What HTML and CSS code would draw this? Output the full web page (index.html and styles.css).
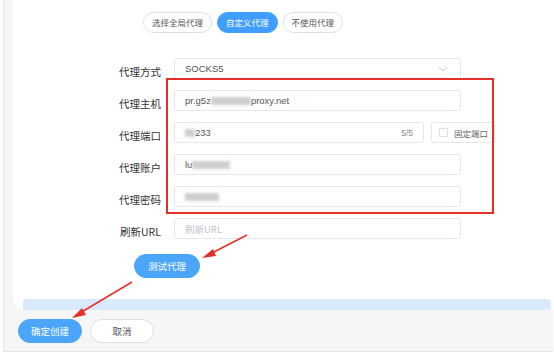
FILE: index.html
```html
<!DOCTYPE html>
<html lang="zh">

<head>
    <meta charset="UTF-8">
    <meta name="viewport" content="width=device-width, initial-scale=1.0">
    <title>代理设置</title>
    <link rel="stylesheet" href="styles.css">
</head>

<body>
    <div class="panel">
        <div class="card">
            <div class="tabs">
                <div class="tab">选择全局代理</div>
                <div class="tab active">自定义代理</div>
                <div class="tab">不使用代理</div>
            </div>

            <div class="form">
                <div class="form-row">
                    <div class="form-label">代理方式</div>
                    <div class="form-field select">
                        <span>SOCKS5</span>
                        <svg class="arrow" width="10" height="6" viewBox="0 0 10 6">
                            <path d="M1 1 L5 5 L9 1" fill="none" stroke="#c0c4cc" stroke-width="1"/>
                        </svg>
                    </div>
                </div>
                <div class="form-row">
                    <div class="form-label">代理主机</div>
                    <div class="form-field">
                        <span>pr.g5z</span><span class="blur w40"></span><span>proxy.net</span>
                    </div>
                </div>
                <div class="form-row">
                    <div class="form-label">代理端口</div>
                    <div class="form-field port">
                        <span class="blur w10"></span><span>233</span>
                        <span class="count">5/5</span>
                    </div>
                    <div class="check">
                        <span class="box"></span>固定端口
                    </div>
                </div>
                <div class="form-row">
                    <div class="form-label">代理账户</div>
                    <div class="form-field">
                        <span>lu</span><span class="blur w38"></span>
                    </div>
                </div>
                <div class="form-row">
                    <div class="form-label">代理密码</div>
                    <div class="form-field">
                        <span class="blur w34"></span>
                    </div>
                </div>
                <div class="form-row">
                    <div class="form-label">刷新URL</div>
                    <div class="form-field placeholder">刷新URL</div>
                </div>
            </div>

            <button class="btn btn-primary btn-test">测试代理</button>

            <div class="tip-bar"></div>

            <div class="highlight"></div>
        </div>

        <div class="footer">
            <button class="btn btn-primary">确定创建</button>
            <button class="btn btn-plain">取消</button>
        </div>
    </div>

    <!-- 标注箭头 -->
    <svg class="marks" width="554" height="359" viewBox="0 0 554 359">
        <line x1="247" y1="235" x2="210" y2="254" stroke="#e3302a" stroke-width="1.5"/>
        <polygon points="202,258 213,249 216,256" fill="#e3302a"/>
        <line x1="132" y1="282" x2="80" y2="313" stroke="#e3302a" stroke-width="1.5"/>
        <polygon points="72,318 82,308 86,315" fill="#e3302a"/>
    </svg>

    <div class="watermark wm1">HD-5GAA3<br>2024/08/19</div>
    <div class="watermark wm2">HD-5GAA3<br>2024/08/19</div>
</body>

</html>
```

FILE: styles.css
```css
body {
    margin: 0;
    background-color: #fff;
    font-family: "Noto Sans CJK SC", "Liberation Sans", sans-serif;
    position: relative;
    width: 554px;
    height: 359px;
    overflow: hidden;
}

.panel {
    margin-left: 3px;
    width: 550px;
    height: 352px;
    background-color: #f6f6f6;
    border-left: 1px solid #e6e6e6;
    border-bottom: 1px solid #e6e6e6;
    padding-left: 9px;
    box-sizing: border-box;
}

.card {
    position: relative;
    background-color: #fff;
    height: 310px;
    margin-right: -4px;
    border-radius: 0 0 10px 10px;
    overflow: hidden;
    padding-top: 12px;
    box-sizing: border-box;
}

.tabs {
    display: flex;
    gap: 5px;
    margin-left: 130px;
}

.tab {
    height: 21px;
    line-height: 19px;
    padding: 0 8px;
    border: 1px solid #dcdfe6;
    border-radius: 11px;
    font-size: 8.5px;
    color: #555;
    box-sizing: border-box;
}

.tab.active {
    background-color: #409eff;
    border-color: #409eff;
    color: #fff;
}

.form {
    margin-top: 25px;
    display: flex;
    flex-direction: column;
    gap: 11px;
}

.form-row {
    display: flex;
    align-items: center;
    height: 21px;
}

.form-label {
    width: 148px;
    margin-right: 13px;
    text-align: right;
    font-size: 10.5px;
    color: #333;
    padding-top: 5px;
}

.form-field {
    width: 287px;
    height: 21px;
    border: 1px solid #e4e7ed;
    border-radius: 3px;
    box-sizing: border-box;
    padding: 0 10px;
    display: flex;
    align-items: center;
    font-size: 9.5px;
    color: #555;
    font-family: "Liberation Sans", "Noto Sans CJK SC", sans-serif;
}

.select {
    justify-content: space-between;
}

.arrow {
    margin-right: 2px;
}

.port {
    width: 250px;
}

.count {
    margin-left: auto;
    font-size: 8.5px;
    color: #888;
}

.check {
    margin-left: 7px;
    width: 64px;
    height: 21px;
    border: 1px solid #e4e7ed;
    border-radius: 3px;
    box-sizing: border-box;
    display: flex;
    align-items: center;
    padding-left: 7px;
    font-size: 8.5px;
    color: #666;
    white-space: nowrap;
}

.box {
    width: 7px;
    height: 7px;
    border: 1px solid #dcdfe6;
    border-radius: 1px;
    margin-right: 6px;
}

.placeholder {
    color: #c0c4cc;
    font-family: "Noto Sans CJK SC", "Liberation Sans", sans-serif;
}

.blur {
    display: inline-block;
    height: 8px;
    background-color: #cfcfcf;
    filter: blur(1.5px);
}

.w10 { width: 10px; }
.w34 { width: 34px; }
.w38 { width: 38px; }
.w40 { width: 40px; }

.btn {
    height: 24px;
    border-radius: 12px;
    font-size: 9.5px;
    font-family: "Noto Sans CJK SC", sans-serif;
    border: 1px solid transparent;
    padding: 0;
    cursor: pointer;
}

.btn-primary {
    background-color: #4ba5f8;
    border-color: #4ba5f8;
    color: #fff;
}

.btn-plain {
    background-color: #fff;
    border-color: #dcdfe6;
    color: #555;
}

.btn-test {
    display: block;
    width: 66px;
    margin: 15px 0 0 121px;
}

.tip-bar {
    position: absolute;
    left: 10px;
    right: 6px;
    bottom: 0;
    height: 11px;
    background-color: #d9eafc;
    border-radius: 4px 4px 0 0;
}

.highlight {
    position: absolute;
    left: 153px;
    top: 78px;
    width: 328px;
    height: 136px;
    border: 2px solid #e3302a;
    box-sizing: border-box;
}

.footer {
    display: flex;
    gap: 8px;
    margin: 9px 0 0 5px;
}

.footer .btn {
    width: 64px;
}

.marks {
    position: absolute;
    left: 0;
    top: 0;
    pointer-events: none;
}

.watermark {
    position: absolute;
    font-family: "Liberation Sans", sans-serif;
    font-size: 30px;
    line-height: 34px;
    color: rgba(0, 0, 0, 0.025);
    transform: rotate(-30deg);
    pointer-events: none;
    white-space: nowrap;
}

.wm1 { left: 20px; top: 80px; }
.wm2 { left: 300px; top: 120px; }
```
